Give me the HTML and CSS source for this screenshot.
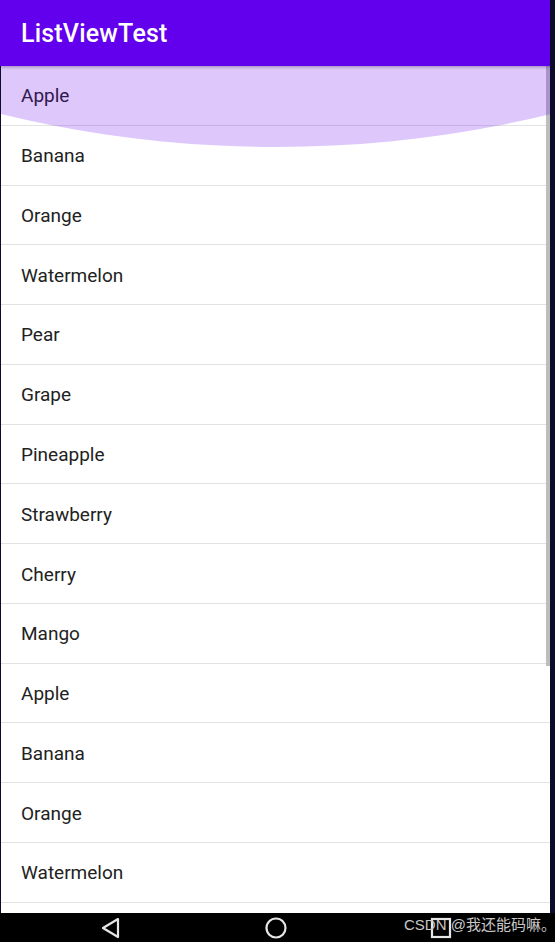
FILE: index.html
```html
<!DOCTYPE html>
<html>
<head>
<meta charset="utf-8">
<link rel="stylesheet" href="styles.css">
</head>
<body>
<div class="device">
  <div class="screen">
    <header class="appbar"><h1 class="title">ListViewTest</h1></header>
    <div class="list">
      <div class="row">Apple</div>
      <div class="row">Banana</div>
      <div class="row">Orange</div>
      <div class="row">Watermelon</div>
      <div class="row">Pear</div>
      <div class="row">Grape</div>
      <div class="row">Pineapple</div>
      <div class="row">Strawberry</div>
      <div class="row">Cherry</div>
      <div class="row">Mango</div>
      <div class="row">Apple</div>
      <div class="row">Banana</div>
      <div class="row">Orange</div>
      <div class="row">Watermelon</div>
      <div class="scrollbar"></div>
      <div class="ripple"></div>
    </div>
    <nav class="navbar">
      <svg class="nav-icon" width="24" height="24" viewBox="0 0 24 24"><path d="M19 3 L4 12 L19 21 Z" fill="none" stroke="#e6e6e6" stroke-width="2.2" stroke-linejoin="round"/></svg>
      <svg class="nav-icon" width="24" height="24" viewBox="0 0 24 24"><circle cx="12" cy="12" r="9.5" fill="none" stroke="#e6e6e6" stroke-width="2.2"/></svg>
      <svg class="nav-icon" width="24" height="24" viewBox="0 0 24 24"><rect x="3" y="3" width="18" height="18" fill="none" stroke="#e6e6e6" stroke-width="2.2"/></svg>
      <span class="watermark">CSDN @我还能码嘛。</span>
    </nav>
  </div>
</div>
</body>
</html>
```
FILE: styles.css
```css
html, body {
  margin: 0;
  padding: 0;
  background: #0c0b2c;
}
.device {
  width: 555px;
  height: 942px;
  overflow: hidden;
  padding-left: 1px;
  box-sizing: border-box;
}
.screen {
  width: 549px;
  height: 942px;
  display: flex;
  flex-direction: column;
  background: #ffffff;
  font-family: Roboto, "Noto Sans", sans-serif;
}
.appbar {
  height: 66px;
  flex: none;
  background: #6200ee;
  margin-left: -1px;
  display: flex;
  align-items: center;
  padding-left: 21px;
  box-shadow: 0 1px 3px rgba(0,0,0,0.3);
  position: relative;
  z-index: 2;
}
.title {
  margin: 0;
  font-size: 25px;
  font-weight: 500;
  color: #ffffff;
  letter-spacing: 0.2px;
  padding-top: 1px;
}
.list {
  flex: 1;
  position: relative;
  overflow: hidden;
}
.row {
  height: 57.77px;
  border-bottom: 1px solid #e2e2e2;
  display: flex;
  align-items: center;
  padding-left: 20px;
  font-size: 19px;
  color: #222222;
  padding-top: 1px;
  box-sizing: content-box;
}
.scrollbar {
  position: absolute;
  right: 0;
  top: 0;
  width: 4px;
  height: 600px;
  background: #bdbdbd;
}
.ripple {
  position: absolute;
  width: 2324px;
  height: 2324px;
  border-radius: 50%;
  left: -887px;
  top: -2243px;
  background: rgba(98, 0, 238, 0.22);
}
.navbar {
  height: 29px;
  flex: none;
  background: #000000;
  margin-left: -1px;
  margin-right: -6px;
  display: flex;
  align-items: center;
  position: relative;
  padding-left: 99px;
  gap: 141px;
}
.nav-icon {
  display: block;
  flex: none;
}
.watermark {
  position: absolute;
  left: 404px;
  top: 3px;
  line-height: 18px;
  font-family: "Liberation Sans", "Noto Sans CJK SC", sans-serif;
  font-size: 15px;
  color: #c8c8c8;
  white-space: nowrap;
}
```
